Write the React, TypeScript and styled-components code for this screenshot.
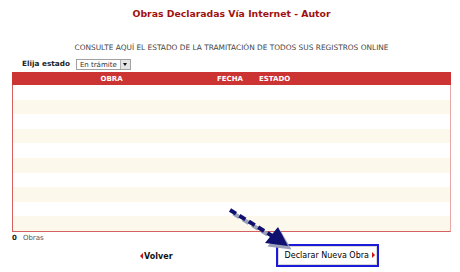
import React from "react";
import styled, { createGlobalStyle } from "styled-components";

const ROWS = 10;

const GlobalStyle = createGlobalStyle`
  html, body {
    margin: 0;
    padding: 0;
    background: #ffffff;
  }
  body {
    font-family: "DejaVu Sans", Verdana, sans-serif;
    color: #333333;
  }
`;

const Page = styled.div`
  position: relative;
  width: 460px;
  height: 272px;
  overflow: hidden;
  padding: 0 9px 0 12px;
  box-sizing: border-box;
`;

const Title = styled.h1`
  margin: 0;
  padding-top: 8px;
  height: 34px;
  box-sizing: border-box;
  text-align: center;
  font-size: 9.3px;
  font-weight: bold;
  color: #a01010;
`;

const Lead = styled.p`
  margin: 9px 0 0;
  text-align: center;
  font-size: 7.4px;
  color: #444444;
  height: 10px;
  line-height: 10px;
`;

const FilterBar = styled.div`
  display: flex;
  align-items: center;
  gap: 6px;
  padding-left: 10px;
  height: 14px;
  margin-top: 3px;
`;

const Label = styled.span`
  font-size: 7.3px;
  font-weight: bold;
  color: #222222;
`;

const Select = styled.div`
  display: flex;
  align-items: center;
  justify-content: space-between;
  width: 55px;
  height: 11px;
  border: 1px solid #a0a0a0;
  box-sizing: border-box;
  background: #ffffff;
  font-size: 7px;
  color: #333333;
  padding-left: 3px;
  margin-top: 3px;
`;

const SelectButton = styled.span`
  width: 9px;
  height: 9px;
  background: #e4e4e4;
  border-left: 1px solid #b0b0b0;
  display: flex;
  align-items: center;
  justify-content: center;
  &::after {
    content: "";
    border-left: 2.5px solid transparent;
    border-right: 2.5px solid transparent;
    border-top: 3px solid #111111;
  }
`;

const Table = styled.div`
  margin-top: 2px;
  border: 1px solid #d46060;
  border-right-color: #e8a8a8;
  border-top: none;
`;

const HeadRow = styled.div`
  display: grid;
  grid-template-columns: 205px 42px 1fr;
  height: 13px;
  align-items: center;
  background: #cc3333;
  margin: 0 -1px;
`;

const HeadCell = styled.span<{ $align?: string; $pad?: number }>`
  font-size: 7px;
  font-weight: bold;
  color: #ffffff;
  text-align: ${(p) => p.$align || "left"};
  padding-right: ${(p) => p.$pad || 0}px;
`;

const Row = styled.div<{ $odd: boolean }>`
  height: 14.6px;
  background: ${(p) => (p.$odd ? "#fdf8ec" : "#ffffff")};
`;

const Count = styled.div`
  font-size: 7px;
  color: #555555;
  margin-top: 2px;
  display: flex;
  gap: 6px;
  b {
    color: #222222;
  }
`;

const Footer = styled.div`
  display: flex;
  align-items: flex-start;
  margin-top: 2px;
`;

const BackLink = styled.span`
  display: flex;
  align-items: center;
  gap: 1px;
  margin-left: 128px;
  margin-top: 8px;
  font-size: 8px;
  font-weight: bold;
  color: #111111;
  &::before {
    content: "";
    border-top: 3px solid transparent;
    border-bottom: 3px solid transparent;
    border-right: 3px solid #cc1111;
  }
`;

const NewButton = styled.span`
  display: flex;
  align-items: center;
  gap: 3px;
  margin-left: 103px;
  width: 103px;
  height: 23px;
  box-sizing: border-box;
  border: 2px solid #1a1ad8;
  padding-left: 7px;
  font-size: 8px;
  color: #000000;
  box-shadow: inset 0 0 0 1px #d8d8d8;
  &::after {
    content: "";
    border-top: 3px solid transparent;
    border-bottom: 3px solid transparent;
    border-left: 3px solid #cc1111;
  }
`;

const Pointer = styled.svg`
  position: absolute;
  left: 224px;
  top: 204px;
`;

export default function App() {
  return (
    <Page>
      <GlobalStyle />
      <Title>Obras Declaradas Vía Internet - Autor</Title>
      <Lead>CONSULTE AQUÍ EL ESTADO DE LA TRAMITACIÓN DE TODOS SUS REGISTROS ONLINE</Lead>
      <FilterBar>
        <Label>Elija estado</Label>
        <Select>
          En trámite
          <SelectButton />
        </Select>
      </FilterBar>
      <Table>
        <HeadRow>
          <HeadCell $align="center" $pad={6}>OBRA</HeadCell>
          <HeadCell>FECHA</HeadCell>
          <HeadCell>ESTADO</HeadCell>
        </HeadRow>
        {Array.from({ length: ROWS }).map((_, i) => (
          <Row key={i} $odd={i % 2 === 1} />
        ))}
      </Table>
      <Count>
        <b>0</b>
        <span>Obras</span>
      </Count>
      <Footer>
        <BackLink>Volver</BackLink>
        <NewButton>Declarar Nueva Obra</NewButton>
      </Footer>
      <Pointer width="72" height="48" viewBox="0 0 72 48">
        <line x1="8" y1="8" x2="50" y2="34" stroke="#9aa0b8" strokeWidth="4" strokeDasharray="7 4" transform="translate(1.5 1.5)" />
        <polygon points="66,44 42,41 55,25" fill="#9aa0b8" transform="translate(1.5 1.5)" />
        <line x1="6" y1="6" x2="50" y2="33" stroke="#101070" strokeWidth="4" strokeDasharray="7 4" />
        <polygon points="64,42 41,39 54,23" fill="#101070" />
      </Pointer>
    </Page>
  );
}
